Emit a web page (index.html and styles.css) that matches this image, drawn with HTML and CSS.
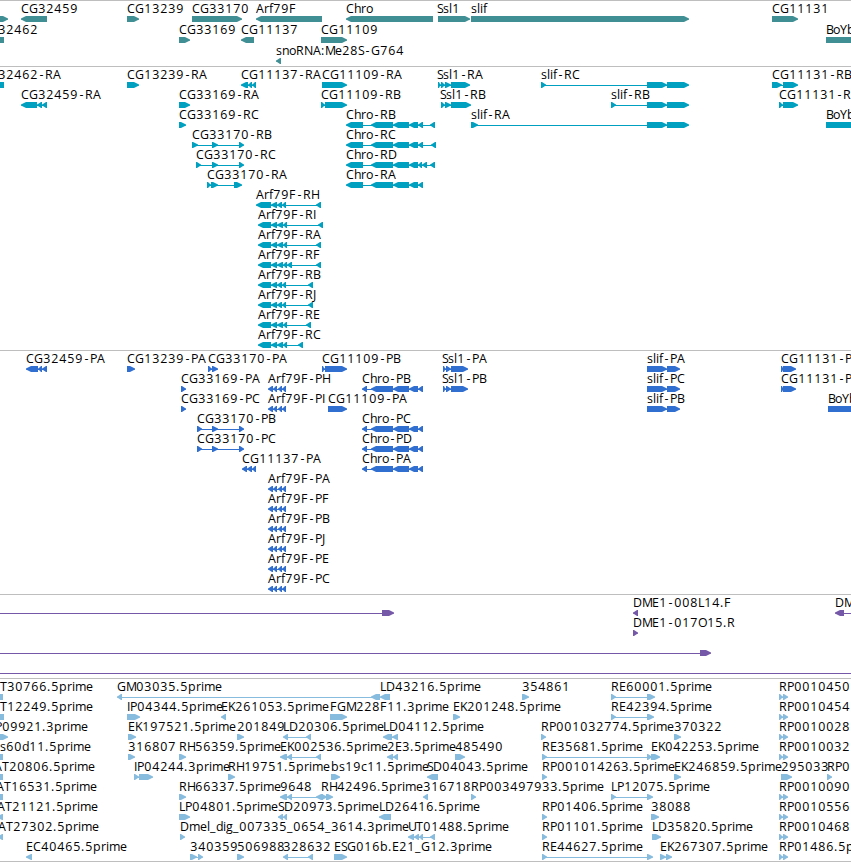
FILE: index.html
```
<!DOCTYPE html>
<html lang="en">
<head>
<meta charset="utf-8">
<title>Genome browser</title>
<link rel="stylesheet" href="styles.css">
</head>
<body>
<main class="browser">
  <svg class="track track-gene" data-track="gene"></svg>
  <svg class="track track-rna" data-track="rna"></svg>
  <svg class="track track-protein" data-track="protein"></svg>
  <svg class="track track-bac" data-track="bac"></svg>
  <svg class="track track-est" data-track="est"></svg>
</main>
<script src="script.js"></script>
</body>
</html>
```
FILE: styles.css
```
body {
  margin: 0;
  background: #fff;
  overflow: hidden;
}

.browser {
  display: flex;
  flex-direction: column;
  width: 851px;
  border-bottom: 1px solid #bebebe;
}

.track {
  display: block;
  box-sizing: border-box;
  width: 100%;
  border-top: 1px solid #bebebe;
  overflow: hidden;
}

.track-gene { height: 66px; color: #408f94; }
.track-rna { height: 284px; color: #00a0c0; }
.track-protein { height: 244px; color: #306fd0; }
.track-bac { height: 84px; color: #7558a8; }
.track-est { height: 183px; color: #88bcde; }

.label {
  font-family: "Open Sans", "Noto Sans", sans-serif;
  font-size: 12.4px;
  fill: #000;
}

.exon { fill: currentColor; }

.intron {
  fill: currentColor;
  shape-rendering: crispEdges;
}
```
FILE: script.js
```
// Each row is a list of features written as "label@labelX strand segments".
// Segments are start:end pairs joined by commas, in pixels.
const arf = s => `Arf79F-${s}@268 - 268:273,273:277,278:282,282:286`;
const chroP = s => `Chro-${s}@362 - 362:367,371:393,393:409,409:418,418:423`;
const chroR = (s, end) => `Chro-${s}@346 - 346:363,371:393,393:409,409:418,${end}`;
const rp = s => `${s}@779 + 779:783,783:788`;

const tracks = {
  gene: { pitch: 21, rows: [
    ["@0 + -5:8", "CG32459@21 - 21:47", "CG13239@127 + 127:139", "CG33170@192 + 192:242", "Arf79F@256 - 256:322", "Chro@346 - 346:433", "Ssl1@437 + 438:470", "slif@471 + 471:689", "CG11131@772 + 772:798"],
    ["CG32462@-19 - -12:4", "CG33169@179 + 179:190", "CG11137@241 - 241:254", "CG11109@321 + 321:347", "BoYb@826 + 826:880"],
    ["snoRNA:Me28S-G764@276 - 276:281"]
  ]},
  rna: { pitch: 20, rows: [
    ["CG32462-RA@-19 - -12:4", "CG13239-RA@127 + 127:139", "CG11137-RA@241 - 241:248,248:252,252:256", "CG11109-RA@322 + 322:347", "Ssl1-RA@437 + 438:441,441:445,445:451,451:470", "slif-RC@541 + 541:546,647:667,667:689", "CG11131-RB@772 + 772:782,783:798"],
    ["CG32459-RA@21 - 21:37,37:42,42:47", "CG33169-RA@179 + 179:190", "CG11109-RB@321 + 321:325,325:347", "Ssl1-RB@440 + 441:445,445:451,451:471", "slif-RB@611 + 611:616,647:667,667:689", "CG11131-R@779 + 779:783,783:798"],
    ["CG33169-RC@179 + 179:186", chroR("RB", "418:423,430:435"), "slif-RA@471 + 471:478,647:667,667:689", "BoYb@826 + 826:880"],
    ["CG33170-RB@192 + 192:198,212:218,239:244", chroR("RC", "418:423,431:436")],
    ["CG33170-RC@196 + 196:201,212:218,239:244", chroR("RD", "418:422,422:427,430:435")],
    ["CG33170-RA@207 + 207:211,211:218,234:242", chroR("RA", "418:423")],
    ["Arf79F-RH@256 - 256:271,271:277,277:282,282:286,316:321"],
    ["Arf79F-RI@258 - 258:271,271:277,277:283,283:287,318:323"],
    ["Arf79F-RA@258 - 258:271,271:277,277:283,283:287,316:321"],
    ["Arf79F-RF@258 - 258:271,271:277,277:283,283:287,287:292,316:321"],
    ["Arf79F-RB@258 - 258:271,271:277,277:282,282:286,308:313"],
    ["Arf79F-RJ@258 - 258:271,271:277,277:282,282:286,308:313"],
    ["Arf79F-RE@258 - 258:271,271:277,277:283,283:287,306:311"],
    ["Arf79F-RC@258 - 258:271,271:277,277:283,283:287,298:303"]
  ]},
  protein: { pitch: 20, rows: [
    ["CG32459-PA@26 - 26:38,38:42,42:47", "CG13239-PA@127 + 127:135", "CG33170-PA@208 + 208:212,212:218", "CG11109-PB@322 + 322:325,325:347", "Ssl1-PA@442 + 443:446,446:451,451:468", "slif-PA@647 + 647:667,667:680", "CG11131-P@781 + 781:784,783:796"],
    ["CG33169-PA@181 + 181:186", arf("PH"), chroP("PB"), "Ssl1-PB@442 + 443:446,446:451,451:468", "slif-PC@647 + 647:667,667:680", "CG11131-P@781 + 781:784,783:796"],
    ["CG33169-PC@181 + 181:186", arf("PI"), "CG11109-PA@328 + 328:347", "slif-PB@647 + 647:667,667:680", "BoYb@828 + 828:880"],
    ["CG33170-PB@197 + 197:202,212:218,239:244", chroP("PC")],
    ["CG33170-PC@197 + 197:202,212:218,239:244", chroP("PD")],
    ["CG11137-PA@242 - 242:247,247:252,252:256", chroP("PA")],
    [arf("PA")], [arf("PF")], [arf("PB")], [arf("PJ")], [arf("PE")], [arf("PC")]
  ]},
  bac: { pitch: 20, rows: [
    ["@0 + -20:-15,382:394", "DME1-008L14.F@633 - 633:638", "DM@835 - 835:844,880:890"],
    ["DME1-017O15.R@633 + 633:638"],
    ["@0 + -20:-15,700:711"],
    ["@0 + -20:-15,880:890"]
  ]},
  est: { pitch: 20, rows: [
    ["T30766.5prime@0 - -12:3", "GM03035.5prime@117 - 117:122,371:380", "LD43216.5prime@380 - 380:390", "354861@522 + 522:529", "RE60001.5prime@611 + 611:616,647:655", rp("RP0010450")],
    ["T12249.5prime@0 - -12:4", "IP04344.5prime@127 + 127:140", "EK261053.5prime@221 - 221:226", "FGM228F11.3prime@330 + 330:347", "EK201248.5prime@453 + 453:460", "RE42394.5prime@611 + 611:616,647:654", rp("RP0010454")],
    ["P09921.3prime@-5 + -5:8", "EK197521.5prime@128 + 128:136", "201849@237 + 237:244", "LD20306.5prime@283 - 283:288,306:311", "LD04112.5prime@383 - 383:392,392:398", "RP001032774.5prime@541 + 541:546", "370322@674 + 674:681", rp("RP0010028")],
    ["s60d11.5prime@0 - -12:3", "316807@128 + 128:135", "RH56359.5prime@179 + 179:186", "EK002536.5prime@280 - 280:287,287:292,316:321", "2E3.5prime@387 - 387:393,393:398", "485490@455 + 455:465", "RE35681.5prime@542 + 542:547,647:652", "EK042253.5prime@651 + 651:660", rp("RP0010032")],
    ["AT20806.5prime@-6 - -12:3", "IP04244.3prime@134 + 134:139,139:153", "RH19751.5prime@228 + 228:235", "bs19c11.5prime@331 + 331:340", "SD04043.5prime@427 - 427:438", "RP001014263.5prime@542 + 542:547", "EK246859.5prime@674 + 674:681", "295033@781 + 781:792", "RP0@827 + 827:832"],
    ["AT16531.5prime@-4 - -12:3", "RH66337.5prime@179 + 179:186", "9648@280 - 280:287,287:292,316:323", "RH42496.5prime@321 + 321:327,326:333", "316718@423 - 423:428", "RP003497933.5prime@471 + 471:476", "LP12075.5prime@611 + 611:616,647:653", rp("RP0010090")],
    ["AT21121.5prime@-3 - -3:3", "LP04801.5prime@179 + 179:190", "SD20973.5prime@278 - 278:283,283:287", "LD26416.5prime@379 - 379:391", "RP01406.5prime@542 + 542:547", "38088@651 + 651:659", rp("RP0010556")],
    ["AT27302.5prime@-2 - -2:3", "Dmel_dig_007335_0654_3614.3prime@180 + 180:185", "UT01488.5prime@408 - 408:414,414:419,419:423,430:435", "RP01101.5prime@542 + 542:547", "LD35820.5prime@652 + 652:661", rp("RP0010468")],
    ["EC40465.5prime@26 - 26:32", "340359@190 + 190:197,198:203", "506988@237 + 237:244", "328632@283 - 283:288,308:313", "ESG016b.E21_G12.3prime@334 + 334:347", "RE44627.5prime@542 + 542:547,647:653", "EK267307.5prime@660 + 660:666,666:672", rp("RP01486.5p")]
  ]}
};

// Advance of each glyph in the label grid; anything absent is 8px wide.
const advance = {
  G: 9, D: 9, O: 9, N: 9, M: 10, E: 7, F: 7, K: 7, B: 7, P: 7, T: 7, Y: 7, L: 6, S: 6, I: 3,
  "-": 7, ".": 4, ":": 4, _: 6, r: 5, f: 4, i: 3, l: 3, m: 11, s: 6,
  e: 7, n: 7, o: 7, h: 7, d: 7, g: 7, c: 6
};

const NS = "http://www.w3.org/2000/svg";
function add(parent, name, attrs) {
  const el = document.createElementNS(NS, name);
  for (const key in attrs) el.setAttribute(key, attrs[key]);
  parent.appendChild(el);
  return el;
}

// Outline of an exon: a 6px bar whose leading end narrows to a 2px tip.
function exonPoints(a, b, y, strand) {
  const tip = strand === "+" ? b : a;
  const base = strand === "+" ? a : b;
  const inward = strand === "+" ? -1 : 1;
  const head = Math.min(5, b - a - 1);
  const neck = tip + inward * head;
  return [
    [base, y], [neck, y], [tip + inward, y + 2], [tip, y + 2.5],
    [tip, y + 3.8], [tip + inward, y + 4], [neck, y + 6], [base, y + 6]
  ].map(p => p.join(",")).join(" ");
}

for (const svg of document.querySelectorAll(".track")) {
  const { pitch, rows } = tracks[svg.dataset.track];
  rows.forEach((row, index) => {
    const top = 15 + index * pitch;
    for (const feature of row) {
      const [, label, labelX, strand, list] = feature.match(/^(.*)@(\S+) (.) (.*)$/);
      const segments = list.split(",").map(s => s.split(":").map(Number));
      const first = segments[0][0];
      const last = segments[segments.length - 1][1];
      if (segments.length > 1) {
        add(svg, "rect", { class: "intron", x: first + 2, y: top + 3, width: last - first - 4, height: 1 });
      }
      for (const [a, b] of segments) {
        add(svg, "polygon", { class: "exon", points: exonPoints(a, b, top, strand) });
      }
      if (label) {
        let x = Number(labelX);
        const xs = [...label].map(ch => {
          const at = x + (/\d/.test(ch) ? 0.3 : ch === "-" ? 1.5 : 0);
          x += advance[ch] || 8;
          return at.toFixed(1);
        });
        add(svg, "text", { class: "label", x: xs.join(" "), y: top - 3 }).textContent = label;
      }
    }
  });
}
```
